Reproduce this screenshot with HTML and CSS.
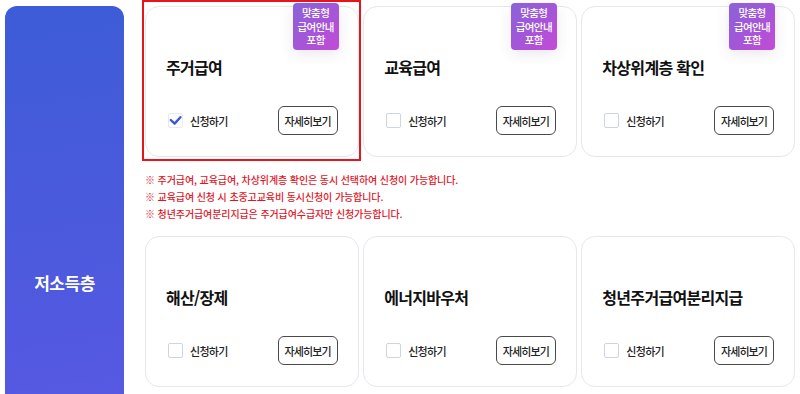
FILE: index.html
```html
<!DOCTYPE html>
<html lang="ko">
<head>
    <meta charset="utf-8">
    <meta name="viewport" content="width=device-width, initial-scale=1.0">
    <title>저소득층 급여 신청</title>
    <link rel="stylesheet" href="styles.css">
</head>
<body>
    <div class="wrap">
        <div class="side">저소득층</div>

        <div class="content">
            <div class="grid">
                <div class="card selected">
                    <span class="badge">맞춤형<br>급여안내<br>포함</span>
                    <h3 class="title">주거급여</h3>
                    <div class="actions">
                        <label class="check">
                            <span class="box on">
                                <svg width="15" height="15" viewBox="0 0 15 15"><polyline points="2.8,7 6.6,10.6 12.4,4.2" fill="none" stroke="#3a57d6" stroke-width="2.4" stroke-linecap="round" stroke-linejoin="round"/></svg>
                            </span>
                            신청하기
                        </label>
                        <button class="more">자세히보기</button>
                    </div>
                </div>
                <div class="card">
                    <span class="badge">맞춤형<br>급여안내<br>포함</span>
                    <h3 class="title">교육급여</h3>
                    <div class="actions">
                        <label class="check"><span class="box"></span>신청하기</label>
                        <button class="more">자세히보기</button>
                    </div>
                </div>
                <div class="card">
                    <span class="badge">맞춤형<br>급여안내<br>포함</span>
                    <h3 class="title">차상위계층 확인</h3>
                    <div class="actions">
                        <label class="check"><span class="box"></span>신청하기</label>
                        <button class="more">자세히보기</button>
                    </div>
                </div>
            </div>

            <ul class="notes">
                <li>※ 주거급여, 교육급여, 차상위계층 확인은 동시 선택하여 신청이 가능합니다.</li>
                <li>※ 교육급여 신청 시 초중고교육비 동시신청이 가능합니다.</li>
                <li>※ 청년주거급여분리지급은 주거급여수급자만 신청가능합니다.</li>
            </ul>

            <div class="grid">
                <div class="card">
                    <h3 class="title">해산/장제</h3>
                    <div class="actions">
                        <label class="check"><span class="box"></span>신청하기</label>
                        <button class="more">자세히보기</button>
                    </div>
                </div>
                <div class="card">
                    <h3 class="title">에너지바우처</h3>
                    <div class="actions">
                        <label class="check"><span class="box"></span>신청하기</label>
                        <button class="more">자세히보기</button>
                    </div>
                </div>
                <div class="card">
                    <h3 class="title">청년주거급여분리지급</h3>
                    <div class="actions">
                        <label class="check"><span class="box"></span>신청하기</label>
                        <button class="more">자세히보기</button>
                    </div>
                </div>
            </div>
        </div>
    </div>
</body>
</html>
```

FILE: styles.css
```css
body {
    margin: 0;
    font-family: "Noto Sans CJK KR", "Noto Sans", sans-serif;
    background: #fff;
    color: #111;
    overflow: hidden;
}

.wrap {
    display: flex;
    gap: 21px;
    padding: 6px 5px 0 5px;
}

/* left category label */
.side {
    width: 119px;
    flex: none;
    min-height: 552px;
    border-radius: 12px;
    background: linear-gradient(172deg, #3d5cd7 0%, #5259e0 60%, #6257e2 100%);
    color: #fff;
    font-size: 17px;
    font-weight: 700;
    letter-spacing: -0.5px;
    display: flex;
    align-items: center;
    justify-content: center;
}

.content {
    flex: 1;
}

.grid {
    display: grid;
    grid-template-columns: repeat(3, 1fr);
    column-gap: 4.5px;
}

.card {
    position: relative;
    height: 151px;
    box-sizing: border-box;
    border: 1px solid #e7e7ec;
    border-radius: 14px;
    padding: 48px 20px 0 20px;
    background: #fff;
}

.card.selected::after {
    content: "";
    position: absolute;
    top: -7px;
    left: -4px;
    right: -3px;
    bottom: -5px;
    border: 2px solid #e8141c;
    pointer-events: none;
}

.badge {
    position: absolute;
    top: -4px;
    right: 19px;
    width: 46px;
    height: 47px;
    box-sizing: border-box;
    padding-top: 3px;
    border-radius: 4px;
    background: linear-gradient(135deg, #8a63d7 0%, #a356d8 50%, #c44bd6 100%);
    box-shadow: 0 4px 14px rgba(80, 60, 120, 0.12);
    color: #fff;
    font-size: 10.5px;
    font-weight: 500;
    line-height: 13.5px;
    text-align: center;
    letter-spacing: -0.6px;
}

.title {
    margin: 0;
    font-size: 16px;
    line-height: 24px;
    font-weight: 700;
    letter-spacing: -0.7px;
    color: #111;
}

.actions {
    margin-top: 27px;
    display: flex;
    align-items: center;
    justify-content: space-between;
}

.check {
    display: flex;
    align-items: center;
    gap: 7px;
    margin-left: 2px;
    font-size: 11px;
    font-weight: 500;
    letter-spacing: -0.7px;
    color: #222;
}

.box {
    width: 15px;
    height: 15px;
    box-sizing: border-box;
    border: 1px solid #cdd4e4;
    border-radius: 2px;
    background: #fff;
}

.box.on {
    border-color: #e6eaf4;
}

.box svg {
    display: block;
    margin: -1px;
}

.more {
    width: 60px;
    height: 29px;
    padding: 0;
    border: 1px solid #4a4a4a;
    border-radius: 6px;
    background: #fff;
    font-family: inherit;
    font-size: 11px;
    font-weight: 500;
    letter-spacing: -0.9px;
    color: #222;
}

.notes {
    list-style: none;
    margin: 14px 0 14px 0;
    padding: 0;
    color: #e3151f;
    font-size: 10px;
    font-weight: 500;
    line-height: 17px;
    letter-spacing: -0.1px;
}
```
